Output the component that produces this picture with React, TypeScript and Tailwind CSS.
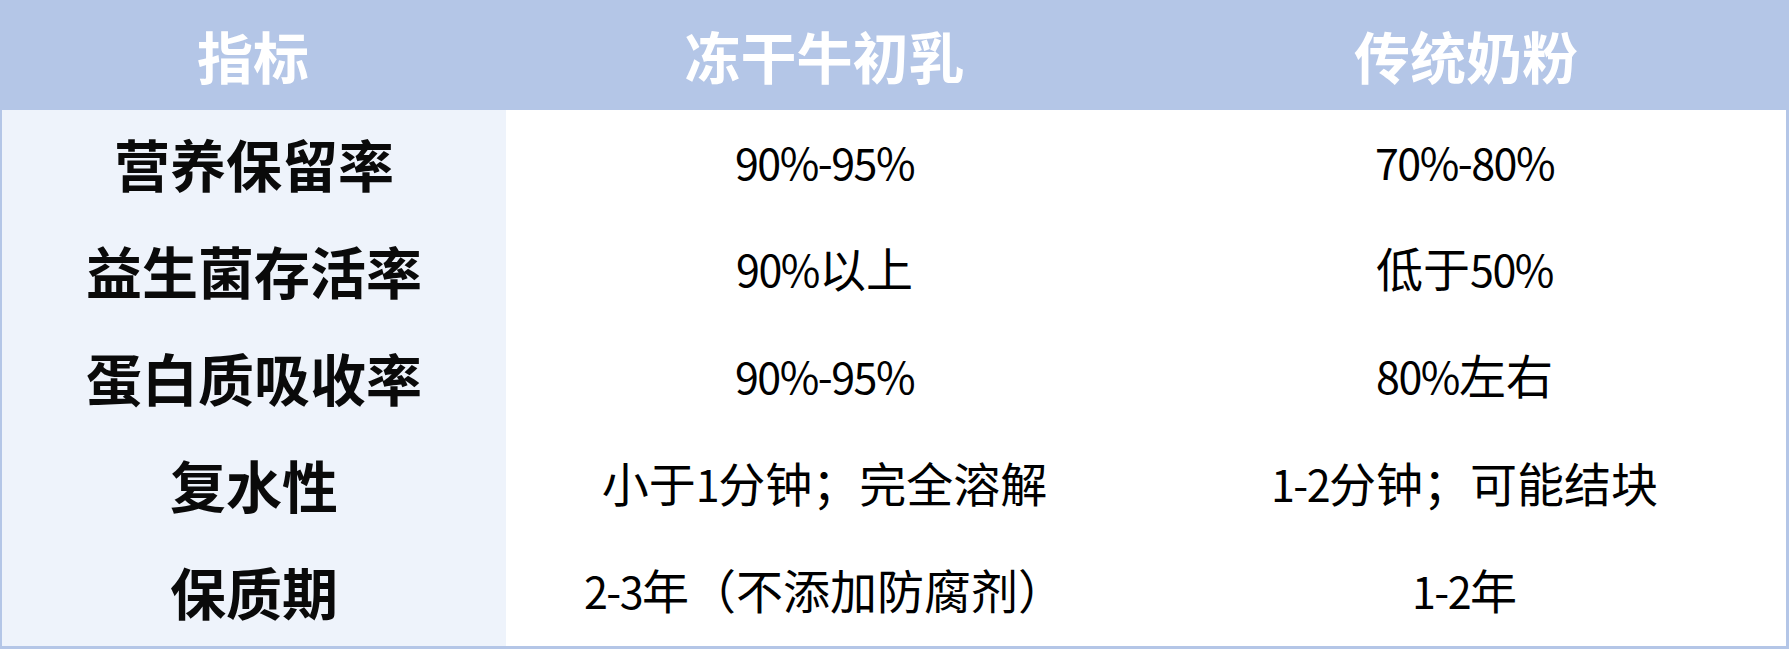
import React from 'react';

const rows = [
  { label: '营养保留率', a: '90%-95%', b: '70%-80%' },
  { label: '益生菌存活率', a: '90%以上', b: '低于50%' },
  { label: '蛋白质吸收率', a: '90%-95%', b: '80%左右' },
  { label: '复水性', a: '小于1分钟；完全溶解', b: '1-2分钟；可能结块' },
  { label: '保质期', a: '2-3年（不添加防腐剂）', b: '1-2年' },
];

// digits in the source are half-width (SimHei style), so set the ascii runs a bit tighter
function Value({ text }: { text: string }) {
  const parts = text.match(/[0-9%\-]+|[^0-9%\-]+/g) ?? [];
  return (
    <>
      {parts.map((p, i) =>
        /^[0-9%\-]+$/.test(p) ? (
          <span key={i} className="text-[43px] tracking-[-1.5px]">
            {p}
          </span>
        ) : (
          <span key={i}>{p}</span>
        )
      )}
    </>
  );
}

export default function App() {
  return (
    <div
      className="w-[1789px] h-[649px] flex flex-col bg-white"
      style={{ fontFamily: '"Noto Sans CJK SC", "Noto Sans", sans-serif' }}
    >
      {/* header */}
      <div className="h-[110px] shrink-0 bg-[#b4c6e7] grid grid-cols-[506px_637px_1fr] text-white font-bold text-[56px] leading-none">
        <div className="flex items-center justify-center">指标</div>
        <div className="flex items-center justify-center">冻干牛初乳</div>
        <div className="flex items-center justify-center">传统奶粉</div>
      </div>

      {/* body */}
      <div className="flex-1 border-l-2 border-r-[3px] border-b-[3px] border-[#b4c6e7] grid grid-cols-[504px_637px_1fr] grid-rows-5">
        {rows.map((r) => (
          <React.Fragment key={r.label}>
            <div className="bg-[#eef3fb] flex items-center justify-center text-[56px] font-bold text-[#0a0a0a] leading-none pb-[2px]">
              {r.label}
            </div>
            <div className="flex items-center justify-center text-[47px] text-black leading-none pb-[8px]">
              <div>
                <Value text={r.a} />
              </div>
            </div>
            <div className="flex items-center justify-center text-[47px] text-black leading-none pb-[8px]">
              <div>
                <Value text={r.b} />
              </div>
            </div>
          </React.Fragment>
        ))}
      </div>
    </div>
  );
}
